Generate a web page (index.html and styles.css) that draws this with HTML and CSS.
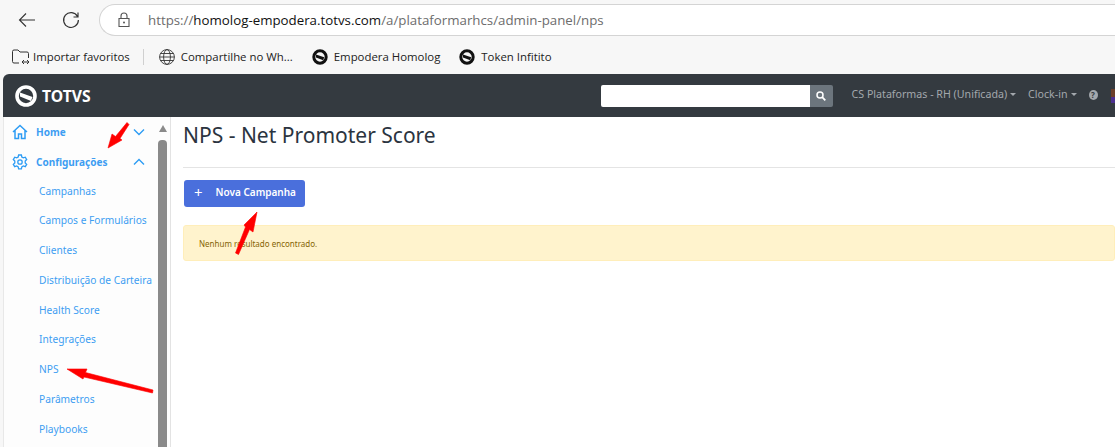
FILE: index.html
```html
<!DOCTYPE html>
<html lang="en">
<head>
    <meta charset="UTF-8">
    <meta name="viewport" content="width=device-width, initial-scale=1.0">
    <title>NPS - Net Promoter Score</title>
    <link rel="stylesheet" href="styles.css">
</head>
<body>

    <div class="browser-bar">
        <svg class="nav-icon" width="20" height="20" viewBox="0 0 20 20"><path d="M18 10H2.500M9 3.500L2.500 10 9 16.500" fill="none" stroke="#333" stroke-width="1.100"/></svg>
        <svg class="nav-icon reload" width="20" height="20" viewBox="0 0 20 20"><path d="M16.500 6.500A7.400 7.400 0 1 0 17.400 10M17 2.500v4.500h-4.500" fill="none" stroke="#333" stroke-width="1.200"/></svg>
        <div class="address-bar">
            <svg width="14" height="16" viewBox="0 0 14 16"><path d="M4 6V4a3 3 0 0 1 6 0v2M2 6.500h10v8H2z" fill="none" stroke="#555" stroke-width="1.100"/><circle cx="7" cy="10.500" r="1" fill="#555"/></svg>
            <span class="url">https://<b>homolog-empodera.totvs.com</b>/a/plataformarhcs/admin-panel/nps</span>
            <svg class="zoom-icon" width="12" height="12" viewBox="0 0 12 12"><circle cx="6" cy="6" r="5" fill="none" stroke="#555" stroke-width="1"/><path d="M3.500 6h5" stroke="#555" stroke-width="1"/></svg>
        </div>
    </div>

    <div class="favorites">
        <a class="fav fav-first">
            <svg width="20" height="18" viewBox="0 0 20 18"><path d="M8 15H3a1.500 1.500 0 0 1-1.500-1.500v-10A1.500 1.500 0 0 1 3 2h4l2 2h7a1.500 1.500 0 0 1 1.500 1.500V10M11 14h7M13 12l-2 2 2 2M16 12l2 2-2 2" fill="none" stroke="#333" stroke-width="1"/></svg>
            Importar favoritos
        </a>
        <span class="fav-sep"></span>
        <a class="fav">
            <svg width="16" height="16" viewBox="0 0 16 16"><g fill="none" stroke="#333" stroke-width=".9"><circle cx="8" cy="8" r="7.400"/><ellipse cx="8" cy="8" rx="3.400" ry="7.400"/><path d="M.6 8h14.800M1.500 4.500h13M1.500 11.500h13"/></g></svg>
            Compartilhe no Wh...
        </a>
        <a class="fav">
            <svg width="16" height="16" viewBox="0 0 16 16"><circle cx="8" cy="8" r="6.200" fill="none" stroke="#111" stroke-width="3"/><path d="M4 5.500l8.200 2.800-1 3L4 8.500z" fill="#111"/></svg>
            Empodera Homolog
        </a>
        <a class="fav">
            <svg width="16" height="16" viewBox="0 0 16 16"><circle cx="8" cy="8" r="6.200" fill="none" stroke="#111" stroke-width="3"/><path d="M4 5.500l8.200 2.800-1 3L4 8.500z" fill="#111"/></svg>
            Token Infitito
        </a>
    </div>

    <div class="app">
        <div class="topbar">
            <a class="logo">
                <svg width="22" height="22" viewBox="0 0 22 22"><circle cx="11" cy="11" r="9" fill="none" stroke="#fff" stroke-width="3.600"/><path d="M5 7.500l12.500 4.500-1.500 4L5 11.500z" fill="#fff"/></svg>
                <span>TOTVS</span>
            </a>
            <div class="search">
                <input class="search-input" type="text">
                <button class="search-button">
                    <svg width="10" height="10" viewBox="0 0 10 10"><circle cx="4" cy="4" r="3" fill="none" stroke="#fff" stroke-width="1.500"/><path d="M6.200 6.200L9.300 9.300" stroke="#fff" stroke-width="1.800"/></svg>
                </button>
            </div>
            <a class="top-link">CS Plataformas - RH (Unificada)<i class="caret"></i></a>
            <a class="top-link">Clock-in<i class="caret"></i></a>
            <span class="help">?</span>
            <span class="avatar"></span>
        </div>

        <div class="main">
            <div class="sidebar">
                <ul class="menu">
                    <li class="menu-head">
                        <svg width="16" height="16" viewBox="0 0 16 16"><path d="M1 8l7-6.500L15 8M3 6.500V14.500h3.500V10h3v4.500H13V6.500" fill="none" stroke="#2d9cf4" stroke-width="1.500"/></svg>
                        <span>Home</span>
                        <svg class="chevron" width="12" height="8" viewBox="0 0 12 8"><path d="M1 1.500l5 5 5-5" fill="none" stroke="#2d9cf4" stroke-width="1.400"/></svg>
                    </li>
                    <li class="menu-head">
                        <svg width="16" height="16" viewBox="0 0 16 16"><path d="M6.600 1h2.800l.4 2 1.500.9 2-.7 1.400 2.400-1.500 1.400v1.900l1.500 1.400-1.400 2.400-2-.7-1.500.9-.4 2H6.600l-.4-2-1.500-.9-2 .7-1.400-2.400 1.500-1.400V7L1.300 5.600l1.400-2.400 2 .7 1.500-.9z" fill="none" stroke="#2d9cf4" stroke-width="1.300"/><circle cx="8" cy="8" r="2.200" fill="none" stroke="#2d9cf4" stroke-width="1.300"/></svg>
                        <span>Configurações</span>
                        <svg class="chevron" width="12" height="8" viewBox="0 0 12 8"><path d="M1 6.500l5-5 5 5" fill="none" stroke="#2d9cf4" stroke-width="1.400"/></svg>
                    </li>
                    <li class="menu-item">Campanhas</li>
                    <li class="menu-item">Campos e Formulários</li>
                    <li class="menu-item">Clientes</li>
                    <li class="menu-item">Distribuição de Carteira</li>
                    <li class="menu-item">Health Score</li>
                    <li class="menu-item">Integrações</li>
                    <li class="menu-item">NPS</li>
                    <li class="menu-item">Parâmetros</li>
                    <li class="menu-item">Playbooks</li>
                </ul>
                <div class="scrollbar">
                    <i class="scroll-up"></i>
                    <div class="scroll-thumb"></div>
                </div>
            </div>

            <div class="content">
                <h1>NPS - Net Promoter Score</h1>
                <hr>
                <button class="new-button"><span class="plus">+</span>Nova Campanha</button>
                <div class="alert">Nenhum resultado encontrado.</div>
            </div>
        </div>
    </div>

    <!-- red arrows drawn on top of the screenshot -->
    <svg class="arrows" width="1115" height="447" viewBox="0 0 1115 447">
        <g fill="#f00" stroke="#f00" stroke-width=".6" stroke-linejoin="round">
            <path d="M108 148L112 134 115.500 136.500 127 122.500 129 124.500 120 138.500 122 140z"/>
            <path d="M67 369L87 369 85.500 372.500 153 390 152.500 393 84 377 83 379z"/>
            <path d="M257 212L253 232 249.500 229.500 238.500 254.500 235.500 253 245.500 227 244 225z"/>
        </g>
    </svg>

</body>
</html>
```

FILE: styles.css
```css
body {
    margin: 0;
    width: 1115px;
    height: 447px;
    overflow: hidden;
    background-color: #f7f7f7;
    font-family: "Noto Sans", sans-serif;
}

.browser-bar {
    display: flex;
    align-items: center;
    height: 39px;
    padding-left: 17px;
}
.nav-icon {
    flex: none;
}
.reload {
    margin-left: 24px;
}
.address-bar {
    display: flex;
    align-items: center;
    flex: none;
    width: 1040px;
    height: 30px;
    margin-left: 18px;
    padding-left: 17px;
    background-color: #ffffff;
    border: 1px solid #d4d4d4;
    border-radius: 16px 0 0 16px;
    border-right: none;
}
.url {
    margin-left: 17px;
    font-family: "Open Sans", sans-serif;
    font-size: 13.300px;
    color: #6d6d6d;
    white-space: nowrap;
}
.url b {
    font-weight: 400;
    color: #111;
}
.zoom-icon {
    margin-left: auto;
    margin-right: 25px;
}

.favorites {
    display: flex;
    align-items: center;
    height: 35px;
    padding-left: 11px;
}
.fav {
    display: flex;
    align-items: center;
    gap: 6px;
    margin-right: 19px;
    font-family: "Open Sans", sans-serif;
    font-size: 11.400px;
    color: #222;
    white-space: nowrap;
}
.fav-first {
    gap: 2px;
    margin-right: 13px;
}
.fav-sep {
    width: 1px;
    height: 16px;
    margin-right: 15px;
    background-color: #d0d0d0;
}

.app {
    height: 373px;
    margin-left: 3px;
    background-color: #ffffff;
    border-radius: 6px 0 0 0;
    overflow: hidden;
}

.topbar {
    display: flex;
    align-items: center;
    height: 43px;
    padding-left: 12px;
    background-color: #343a40;
}
.logo {
    display: flex;
    align-items: center;
    gap: 5px;
    width: 78px;
    color: #fff;
    font-size: 15.700px;
    font-weight: 700;
}
.search {
    display: flex;
    margin-left: 510px;
}
.search-input {
    width: 209px;
    height: 22px;
    padding: 0;
    box-sizing: border-box;
    border: 0;
    border-radius: 2px 0 0 2px;
    background-color: #fff;
}
.search-button {
    display: flex;
    align-items: center;
    justify-content: center;
    width: 23px;
    height: 22px;
    padding: 0;
    border: 0;
    border-radius: 0 2px 2px 0;
    background-color: #6c757d;
}
.top-link {
    display: flex;
    align-items: center;
    margin-left: 12px;
    padding-bottom: 3px;
    font-size: 10.650px;
    color: #a3a8ad;
    white-space: nowrap;
}
.search + .top-link {
    margin-left: 19px;
}
.caret {
    width: 0;
    height: 0;
    margin-left: 3px;
    border-top: 3px solid #a3a8ad;
    border-left: 3px solid transparent;
    border-right: 3px solid transparent;
}
.help {
    width: 10px;
    height: 10px;
    margin-left: 12px;
    margin-bottom: 1px;
    border-radius: 50%;
    background-color: #a3a8ad;
    color: #343a40;
    font-size: 8px;
    font-weight: 700;
    line-height: 10px;
    text-align: center;
}
.avatar {
    width: 5px;
    height: 14px;
    margin-left: 13px;
    background: linear-gradient(#6b3f2a 0 8px, #4b2f8f 8px);
}

.main {
    display: flex;
    height: 330px;
}

.sidebar {
    display: flex;
    flex: none;
    width: 168px;
    box-sizing: border-box;
    background-color: #fdfdfd;
    border-right: 1px solid #e3e3e3;
    border-left: 1px solid #e8e8e8;
}
.menu {
    flex: 1;
    margin: 0;
    padding: 0;
    list-style: none;
}
.menu-head {
    display: flex;
    align-items: center;
    height: 29.750px;
    padding-left: 8px;
    color: #3d9df2;
    font-size: 10px;
    font-weight: 700;
}
.menu-head span {
    margin-left: 8px;
}
.chevron {
    margin-left: auto;
    margin-right: 13px;
}
.menu-item {
    height: 29.750px;
    padding-left: 35px;
    color: #3d9df2;
    font-size: 10.200px;
    line-height: 29.750px;
    white-space: nowrap;
}

.scrollbar {
    display: flex;
    flex-direction: column;
    align-items: center;
    flex: none;
    width: 9px;
    margin-right: 3px;
}
.scroll-up {
    width: 0;
    height: 0;
    margin-top: 8px;
    border-bottom: 7px solid #8a8a8a;
    border-left: 4.500px solid transparent;
    border-right: 4.500px solid transparent;
}
.scroll-thumb {
    flex: 1;
    width: 9px;
    margin-top: 8px;
    border-radius: 4px 4px 0 0;
    background-color: #8a8a8a;
}

.content {
    flex: 1;
    padding: 0 0 0 12px;
    background-color: #fff;
}
.content h1 {
    margin: 4px 0 0;
    font-size: 21px;
    font-weight: 400;
    line-height: 28px;
    color: #2b3440;
}
.content hr {
    margin: 18px 0 12px;
    border: 0;
    border-top: 1px solid #e4e4e4;
}
.new-button {
    display: flex;
    align-items: center;
    width: 121px;
    height: 27px;
    margin-left: 1px;
    padding: 0 0 3px 10px;
    border: 0;
    border-radius: 3px;
    background-color: #4a6fdc;
    color: #fff;
    font-family: "Noto Sans", sans-serif;
    font-size: 10px;
    font-weight: 600;
    white-space: nowrap;
}
.plus {
    margin-right: 13px;
    font-size: 15px;
    font-weight: 400;
}
.alert {
    height: 36px;
    margin-top: 18px;
    padding-left: 15px;
    box-sizing: border-box;
    background-color: #fff3cd;
    border: 1px solid #ffeeba;
    border-radius: 3px;
    color: #856404;
    font-size: 8px;
    line-height: 36px;
}

.arrows {
    position: absolute;
    top: 0;
    left: 0;
}
```
